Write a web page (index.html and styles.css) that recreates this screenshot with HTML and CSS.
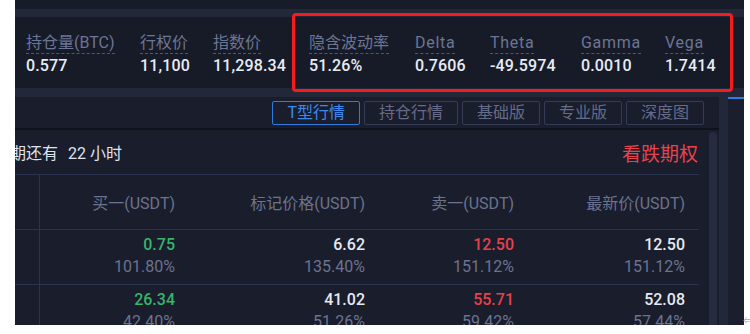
FILE: index.html
```html
<!DOCTYPE html>
<html lang="zh-CN">
<head>
<meta charset="utf-8">
<title>期权行情</title>
<link rel="stylesheet" href="styles.css">
</head>
<body>
<div class="app">
  <div class="topstrip"></div>
  <div class="stats">
    <div class="stat"><span class="label">持仓量(BTC)</span><span class="value">0.577</span></div>
    <div class="stat"><span class="label">行权价</span><span class="value">11,100</span></div>
    <div class="stat"><span class="label">指数价</span><span class="value">11,298.34</span></div>
    <div class="stat"><span class="label">隐含波动率</span><span class="value">51.26%</span></div>
    <div class="stat"><span class="label latin">Delta</span><span class="value">0.7606</span></div>
    <div class="stat"><span class="label latin">Theta</span><span class="value">-49.5974</span></div>
    <div class="stat"><span class="label latin">Gamma</span><span class="value">0.0010</span></div>
    <div class="stat"><span class="label latin">Vega</span><span class="value">1.7414</span></div>
  </div>
  <div class="main">
    <div class="panel">
      <div class="tabs">
        <span class="tab active">T型行情</span>
        <span class="tab">持仓行情</span>
        <span class="tab">基础版</span>
        <span class="tab">专业版</span>
        <span class="tab">深度图</span>
      </div>
      <div class="content">
        <div class="scroll">
          <div class="title">
            <span class="expiry"><span>到期还有</span><span class="hours">22 小时</span></span>
            <span class="put">看跌期权</span>
          </div>
          <div class="row head">
            <span class="cell first"></span>
            <span class="cell">买一(USDT)</span>
            <span class="cell">标记价格(USDT)</span>
            <span class="cell">卖一(USDT)</span>
            <span class="cell">最新价(USDT)</span>
          </div>
          <div class="row">
            <span class="cell first"></span>
            <span class="cell"><span class="num green">0.75</span><span class="pct">101.80%</span></span>
            <span class="cell"><span class="num">6.62</span><span class="pct">135.40%</span></span>
            <span class="cell"><span class="num red">12.50</span><span class="pct">151.12%</span></span>
            <span class="cell"><span class="num">12.50</span><span class="pct">151.12%</span></span>
          </div>
          <div class="row">
            <span class="cell first"></span>
            <span class="cell"><span class="num green">26.34</span><span class="pct">42.40%</span></span>
            <span class="cell"><span class="num">41.02</span><span class="pct">51.26%</span></span>
            <span class="cell"><span class="num red">55.71</span><span class="pct">59.42%</span></span>
            <span class="cell"><span class="num">52.08</span><span class="pct">57.44%</span></span>
          </div>
        </div>
        <div class="bar"><div class="thumb"></div></div>
      </div>
    </div>
    <div class="side"></div>
  </div>
</div>
<div class="highlight"></div>
<span class="corner">⇐</span>
</body>
</html>
```
FILE: styles.css
```css
* { box-sizing: border-box; }
body {
  margin: 0;
  background: #ffffff;
  font-family: Roboto, "Noto Sans CJK SC", sans-serif;
}
.app {
  margin-left: 15px;
  width: 729px;
  height: 325px;
  overflow: hidden;
  background: #22273a;
  display: flex;
  flex-direction: column;
}
.topstrip {
  height: 9px;
  flex: none;
  background: #181c29;
  margin-bottom: 8px;
}
.stats {
  flex: none;
  height: 71px;
  background: #171b28;
  display: grid;
  grid-template-columns: 114px 73px 96px 106px 75px 91px 84px 1fr;
  padding: 16px 0 0 11px;
  margin-bottom: 9px;
}
.stat {
  display: flex;
  flex-direction: column;
  align-items: flex-start;
}
.label {
  font-size: 16px;
  line-height: 20px;
  color: #6c7594;
  border-bottom: 1px dashed #4f5775;
  white-space: nowrap;
}
.label.latin { letter-spacing: 0.7px; }
.value {
  font-size: 16px;
  line-height: 22px;
  font-weight: 500;
  color: #e8ecf5;
  margin-top: 1px;
  white-space: nowrap;
  letter-spacing: 0.15px;
}
.main {
  flex: 1;
  display: flex;
  gap: 9px;
  min-height: 0;
}
.panel {
  width: 704px;
  flex: none;
  background: #1a1d2b;
  display: flex;
  flex-direction: column;
}
.tabs {
  box-sizing: content-box;
  height: 27px;
  padding: 4px 15px 0 0;
  display: flex;
  justify-content: flex-end;
  align-items: flex-start;
  gap: 4px;
  border-bottom: 2px solid #0f121a;
}
.tab {
  font-size: 16px;
  line-height: 22px;
  padding: 0 14px;
  border: 1px solid #353c57;
  border-radius: 2px;
  color: #646c8a;
  white-space: nowrap;
}
.tab.active {
  border-color: #2e7be0;
  color: #3d89ee;
}
.content {
  flex: 1;
  display: flex;
  min-height: 0;
}
.scroll {
  width: 684px;
  flex: none;
  overflow: hidden;
}
.title {
  height: 44px;
  display: flex;
  align-items: center;
  justify-content: space-between;
  padding-right: 1px;
}
.expiry {
  margin-left: -21px;
  font-size: 16px;
  color: #dfe3ee;
  white-space: nowrap;
}
.hours { margin-left: 10px; }
.put {
  font-size: 19px;
  color: #e8434d;
}
.row {
  display: grid;
  grid-template-columns: 25px 135px 190px 149px 171px;
  height: 55px;
  border-top: 1px solid #2c3350;
}
.cell {
  text-align: right;
  display: flex;
  flex-direction: column;
  align-items: flex-end;
  padding-top: 4px;
  white-space: nowrap;
}
.cell.first { border-right: 1px solid #2c3350; }
.head .cell {
  padding-top: 0;
  justify-content: center;
  font-size: 16px;
  color: #6b7390;
}
.num {
  font-size: 16px;
  line-height: 22px;
  font-weight: 500;
  color: #e6e9f2;
}
.num.green { color: #36b46b; }
.num.red { color: #e5414b; }
.pct {
  font-size: 16px;
  line-height: 22px;
  color: #6b7390;
}
.bar {
  width: 20px;
  flex: none;
  padding-left: 10px;
}
.thumb {
  width: 8px;
  height: 300px;
  margin-top: 2px;
  border-radius: 4px;
  background: #262b40;
}
.side {
  flex: 1;
  background: #1b1e2c;
  border-top: 2px solid #2f7de1;
}
.highlight {
  position: absolute;
  left: 292px;
  top: 13px;
  width: 441px;
  height: 79px;
  border: 3px solid #f41c1c;
  border-radius: 4px;
}
.corner {
  position: absolute;
  left: 743px;
  top: 314px;
  font-size: 9px;
  color: #aaaaaa;
}
```
